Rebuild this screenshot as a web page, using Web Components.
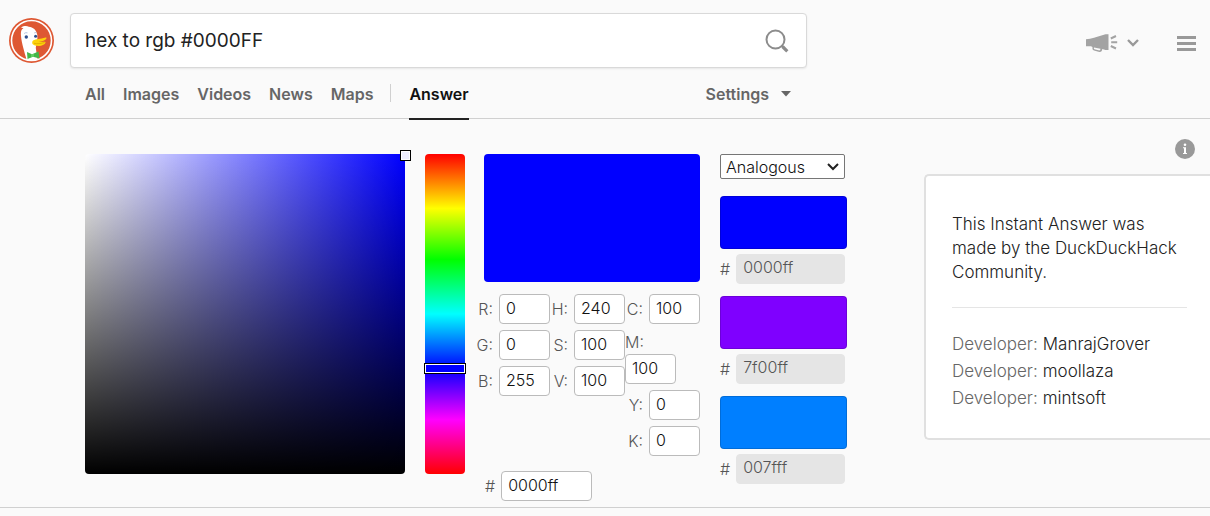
<!DOCTYPE html>
<html lang="en">
<head>
<meta charset="utf-8">
<title>hex to rgb #0000FF at DuckDuckGo</title>
<style>
  html, body { margin: 0; background: #fafafa; }
  body { font: 400 16px/24px Inter, "Open Sans", sans-serif; color: #333; }
</style>
</head>
<body>
<search-page></search-page>

<script>
const define = (name, html, setup) => {
  const template = document.createElement('template');
  template.innerHTML = '<style>*{box-sizing:border-box}</style>' + html;
  customElements.define(name, class extends HTMLElement {
    connectedCallback() {
      if (this.shadowRoot) return;
      const root = this.attachShadow({ mode: 'open' });
      root.append(template.content.cloneNode(true));
      if (setup) setup(this, root);
    }
  });
};

define('duck-logo', `
  <style>:host{display:block;width:45px;height:45px} a,svg{display:block}</style>
  <a href="#" aria-label="DuckDuckGo home">
  <svg width="45" height="45" viewBox="0 0 45 45">
    <circle cx="22.5" cy="22.5" r="22.5" fill="#de5833"/>
    <circle cx="22.5" cy="22.5" r="20" fill="none" stroke="#fff" stroke-width="1.6"/>
    <path d="M17.5 41.5C15.500 34 12.500 25 12 18C11.700 13.500 12.300 11.500 14.500 10.300L12 9.500C14.500 8 17.500 7.600 19.800 8.700C24 9 27.500 12 28.200 16.500C29 22 27 27 26.800 30L28.500 41.300C25 42.400 21 42.400 17.500 41.500Z" fill="#fff"/>
    <path d="M24 22.500C27 20.900 31 21 36.500 19.500C38.300 19.300 37.500 21.200 35.500 22.200C33.500 23.300 31 23.700 29.500 24C32 24.400 35.500 23 36.500 24C36.800 26 33 28 29.500 28C27 28 24.500 27.300 23.500 26C23 24.800 23.200 23.200 24 22.500Z" fill="#fdd20a"/>
    <path d="M25 25.300C28 26 32 25.700 35.500 24.500" fill="none" stroke="#d9a400" stroke-width=".7"/>
    <circle cx="17.300" cy="19" r="1.700" fill="#2d4f8e"/><circle cx="26.600" cy="18.300" r="1.500" fill="#2d4f8e"/>
    <path d="M15.200 15.500q1.500-1.300 3.300-.6M25.200 15q1.200-.9 2.300-.2" fill="none" stroke="#9fb4d8" stroke-width=".8"/>
    <path d="M18 34L23 36.200L29.500 33.500L30.500 40.500L24 38.800L18.500 41Z" fill="#43b649"/>
    <path d="M22 36h3v3h-3z" fill="#5fcf65"/>
  </svg></a>`);

define('search-box', `
  <style>
    :host{display:block}
    form{display:flex;align-items:center;height:55px;padding:0 17px 0 14px;background:#fff;border:1px solid #d9d9d9;border-radius:4px;box-shadow:0 1px 2px rgba(0,0,0,.08)}
    input{flex:1;min-width:0;border:0;padding:0;outline:0;background:none;font:400 19px/28px Inter,sans-serif;color:#222}
    button{border:0;background:none;padding:0;width:24px;height:24px}
    svg{display:block}
  </style>
  <form><input type="text" aria-label="Search" value="hex to rgb #0000FF">
    <button type="button" aria-label="Search the web"><svg width="24" height="24" viewBox="0 0 24 24" fill="none" stroke="#8c8c8c"><circle cx="10.500" cy="10.500" r="9" stroke-width="2"/><path d="M16.500 16.500l1.500 1.500" stroke-width="2"/><path d="M17.500 17.500l4.800 4.800" stroke-width="3.200"/></svg></button></form>`);

define('search-tabs', `
  <style>
    :host{display:block}
    nav{display:flex;align-items:flex-end;height:50px;font-size:16px;font-weight:600}
    a{color:#666;text-decoration:none;line-height:24px;padding-bottom:12px;margin-right:18px;height:36px}
    i{width:1px;height:18px;background:#d0d0d0;margin:0 18px 16px -1px}
    a.on{color:#111;border-bottom:2px solid #222;height:38px;margin-bottom:-2px}
    button{margin:0 16px 12px auto;border:0;background:none;padding:0;font:inherit;line-height:24px;color:#666;display:flex;align-items:center;gap:12px}
  </style>
  <nav><a href="#">All</a><a href="#">Images</a><a href="#">Videos</a><a href="#">News</a><a href="#">Maps</a><i></i><a class="on" href="#" aria-current="page">Answer</a>
  <button type="button">Settings<svg width="10" height="6" viewBox="0 0 10 6"><path d="M0 0h10L5 5.500z" fill="#666"/></svg></button></nav>`);

define('header-tools', `
  <style>
    :host{display:flex;align-items:center;gap:38px}
    button{border:0;background:none;padding:0;display:flex;align-items:center;gap:9px}
    svg{display:block}
  </style>
  <button type="button" aria-label="Follow us">
    <svg width="32" height="20" viewBox="0 0 32 20"><path d="M0 6.200q4-.2 8-1.500L19.500 1.200H22.500V17H19.500L16.300 16Q16 19.600 12.500 18.800L8 17.500Q6 17 6.500 14L5 13.300H0zM8 14.500q-.5 1.500.5 1.800l4 1q2 .5 2-1.600z" fill="#a3a3a3" fill-rule="evenodd"/><path d="M24.800 5.500L30 3M25.200 9.200h6M24.800 13L30 15.500" stroke="#a3a3a3" stroke-width="2"/></svg>
    <svg width="12" height="8" viewBox="0 0 12 8"><path d="M1 1l5 5 5-5" fill="none" stroke="#999" stroke-width="2.400"/></svg>
  </button>
  <button type="button" aria-label="Menu"><svg width="19" height="15" viewBox="0 0 19 15"><path d="M0 1.500h19M0 7.500h19M0 13.500h19" stroke="#999" stroke-width="3"/></svg></button>`);

define('site-header', `
  <style>
    :host{display:flex;align-items:flex-start;border-bottom:1px solid #d0d0d0;padding:13px 14px 0 9px}
    duck-logo{margin:5px 16px 0 0;flex:none}
    .main{flex:0 1 737px;min-width:0}
    search-tabs{margin-left:15px}
    header-tools{margin:20px 0 0 auto}
  </style>
  <duck-logo></duck-logo>
  <div class="main"><search-box></search-box><search-tabs></search-tabs></div>
  <header-tools></header-tools>`);

define('shade-area', `
  <style>
    :host{display:block;position:relative;width:320px;height:320px;border-radius:4px;background:linear-gradient(to top,#000,transparent),linear-gradient(to right,#fff,#00f)}
    b{position:absolute;top:-4px;right:-6px;width:11px;height:11px;border:1px solid #000;box-shadow:inset 0 0 0 1px #fff;background:#eef}
  </style><b></b>`);

define('hue-bar', `
  <style>
    :host{display:block;width:40px;height:320px}
    input{appearance:none;writing-mode:vertical-lr;display:block;width:40px;height:320px;margin:0;border-radius:4px;background:linear-gradient(to bottom,#f00,#ff0 17%,#0f0 33%,#0ff 50%,#00f 67%,#f0f 83%,#f00)}
    input::-webkit-slider-thumb{appearance:none;width:42px;height:11px;margin-left:-1px;border:1px solid #000;border-radius:0;background:#00f;box-shadow:inset 0 0 0 1px #fff}
  </style><input type="range" min="0" max="360" value="243" aria-label="Hue">`);

define('value-field', `
  <style>
    :host{display:flex;justify-content:flex-end;align-items:center;gap:6px;font-weight:300;color:#555}
    :host([wrap]){display:block}
    label{line-height:24px;display:block;padding-bottom:1px}
    :host([wrap]) label{padding:0}
    input{display:block;width:51px;height:30px;border:1px solid #bbb;border-radius:4px;background:#fff;padding:0 6px 2px;font:300 16px/24px Inter,sans-serif;color:#111;outline:0}
    :host([wide]) input{width:91px}
    :host([muted]) input{width:109px;background:#e5e5e5;border-color:#e5e5e5;color:#555;padding-bottom:4px}
  </style><label for="v"></label><input id="v" type="text">`,
  (el, root) => {
    root.querySelector('label').textContent = el.getAttribute('label');
    const input = root.querySelector('input');
    input.setAttribute('value', el.getAttribute('value'));
    if (el.hasAttribute('muted')) input.readOnly = true;
  });

define('color-values', `
  <style>
    :host{display:block;width:225px}
    .preview{height:128px;margin-left:9px;border-radius:4px;background:#00f}
    .sets{display:grid;grid-template-columns:repeat(3,1fr);margin-top:12px}
    .set{display:flex;flex-direction:column;gap:6px}
    .hex{display:flex;margin:15px 0 0 10px}
  </style>
  <div class="preview"></div>
  <div class="sets">
    <div class="set"><value-field label="R:" value="0"></value-field><value-field label="G:" value="0"></value-field><value-field label="B:" value="255"></value-field></div>
    <div class="set"><value-field label="H:" value="240"></value-field><value-field label="S:" value="100"></value-field><value-field label="V:" value="100"></value-field></div>
    <div class="set"><value-field label="C:" value="100"></value-field><value-field wrap label="M:" value="100"></value-field><value-field label="Y:" value="0"></value-field><value-field label="K:" value="0"></value-field></div>
  </div>
  <div class="hex"><value-field wide label="#" value="0000ff"></value-field></div>`);

define('color-swatch', `
  <style>
    :host{display:block}
    .chip{height:53px;border-radius:4px;border:1px solid rgba(0,0,0,.15);margin-bottom:5px}
    .row{display:flex}
  </style><div class="chip"></div><div class="row"></div>`,
  (el, root) => {
    const hex = el.getAttribute('hex');
    root.querySelector('.chip').style.backgroundColor = '#' + hex;
    const field = document.createElement('value-field');
    field.setAttribute('muted', '');
    field.setAttribute('label', '#');
    field.setAttribute('value', hex);
    root.querySelector('.row').append(field);
  });

define('color-palette', `
  <style>
    :host{display:flex;flex-direction:column;gap:12px;width:127px}
    .pick{position:relative;width:125px;margin-bottom:5px}
    select{display:block;appearance:none;width:100%;height:25px;border:1px solid #767676;border-radius:2px;background:#fff;padding:0 5px;font:300 16px/20px Inter,sans-serif;color:#111}
    svg{position:absolute;right:6px;top:9px;pointer-events:none}
  </style>
  <div class="pick"><select aria-label="Palette type"><option>Analogous</option><option>Monochromatic</option><option>Triad</option></select>
  <svg width="12" height="8" viewBox="0 0 12 8"><path d="M1 1l5 5 5-5" fill="none" stroke="#222" stroke-width="2"/></svg></div>
  <color-swatch hex="0000ff"></color-swatch><color-swatch hex="7f00ff"></color-swatch><color-swatch hex="007fff"></color-swatch>`);

define('answer-info', `
  <style>
    :host{display:flex;flex-direction:column;width:286px}
    button{align-self:flex-end;margin:0 15px 15px 0;padding:0;border:0;background:none}
    svg{display:block}
    .card{background:#fff;border:2px solid #e0e0e0;border-right:0;border-radius:5px 0 0 5px;padding:36px 23px 26px 26px;font-size:17px;font-weight:300;color:#222}
    p{margin:0 0 23px;line-height:24px}
    hr{border:0;height:1px;background:#e5e5e5;margin:0 0 23px}
    dl{display:grid;grid-template-columns:auto 1fr;column-gap:5px;margin:0;line-height:27px}
    dt{color:#666} dd{margin:0} a{color:#222;text-decoration:none}
  </style>
  <button type="button" aria-label="About this answer"><svg width="20" height="20" viewBox="0 0 20 20"><circle cx="10" cy="10" r="10" fill="#999"/><path d="M8 8.200h3V14h1v1H8v-1h1V9.200H8z" fill="#fff"/><circle cx="10" cy="5.800" r="1.300" fill="#fff"/></svg></button>
  <div class="card"><p>This Instant Answer was made by the DuckDuckHack Community.</p><hr>
  <dl><dt>Developer:</dt><dd><a href="#">ManrajGrover</a></dd><dt>Developer:</dt><dd><a href="#">moollaza</a></dd><dt>Developer:</dt><dd><a href="#">mintsoft</a></dd></dl></div>`);

define('color-answer', `
  <style>
    :host{display:flex;align-items:flex-start;padding:20px 0 6px 85px;border-bottom:1px solid #d0d0d0}
    .picker{display:flex;padding-top:15px}
    hue-bar{margin:0 10px 0 20px}
    color-palette{margin-left:20px}
    answer-info{margin-left:auto;flex:none}
  </style>
  <div class="picker"><shade-area></shade-area><hue-bar></hue-bar><color-values></color-values><color-palette></color-palette></div>
  <answer-info></answer-info>`);

define('search-page', `
  <style>:host{display:block}</style>
  <header><site-header></site-header></header>
  <main><color-answer></color-answer></main>`);
</script>
</body>
</html>
